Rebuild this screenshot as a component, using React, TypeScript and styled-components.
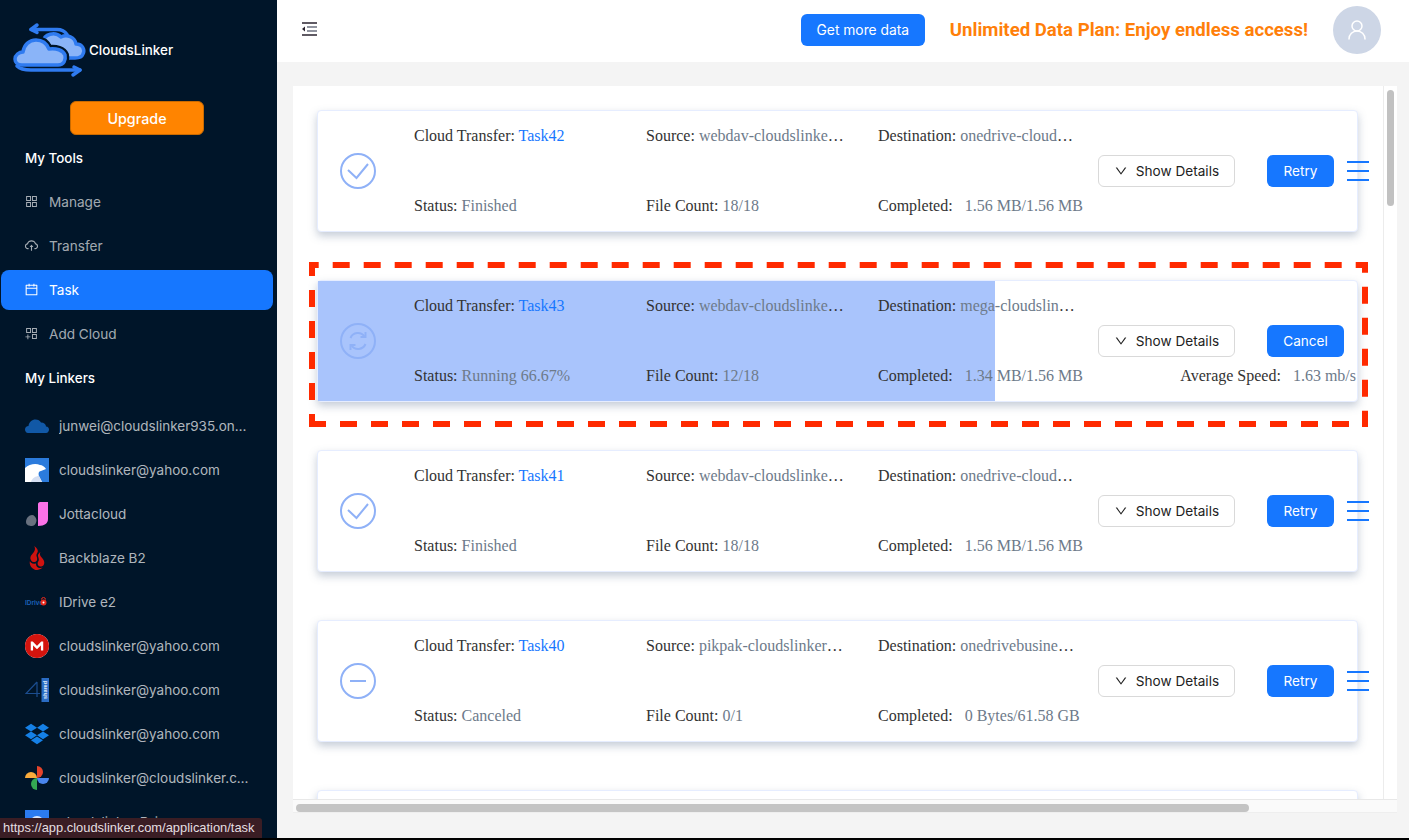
import React, {ReactNode} from 'react'
import styled, {createGlobalStyle} from 'styled-components'
import {
  AiOutlineAppstore,
  AiOutlineAppstoreAdd,
  AiOutlineCalendar,
  AiOutlineCloudUpload,
  AiOutlineDown
} from 'react-icons/ai'
import {FaDropbox} from 'react-icons/fa'
import {SiBackblaze, SiMega} from 'react-icons/si'
import {UserRound} from 'lucide-react'

type TaskStatus = 'finished' | 'running' | 'canceled'

interface Task {
  name: string
  status: TaskStatus
  statusText: string
  source: string
  destination: string
  files: string
  completed: string
  fill?: number
  speed?: string
}

const tasks: Task[] = [
  {
    name: 'Task42',
    status: 'finished',
    statusText: 'Finished',
    source: 'webdav-cloudslinker@yahoo.com',
    destination: 'onedrive-cloudslinker@yahoo.com',
    files: '18/18',
    completed: '1.56 MB/1.56 MB'
  },
  {
    name: 'Task43',
    status: 'running',
    statusText: 'Running 66.67%',
    source: 'webdav-cloudslinker@yahoo.com',
    destination: 'mega-cloudslinker@yahoo.com',
    files: '12/18',
    completed: '1.34 MB/1.56 MB',
    fill: 65.2,
    speed: '1.63 mb/s'
  },
  {
    name: 'Task41',
    status: 'finished',
    statusText: 'Finished',
    source: 'webdav-cloudslinker@yahoo.com',
    destination: 'onedrive-cloudslinker@yahoo.com',
    files: '18/18',
    completed: '1.56 MB/1.56 MB'
  },
  {
    name: 'Task40',
    status: 'canceled',
    statusText: 'Canceled',
    source: 'pikpak-cloudslinker@yahoo.com',
    destination: 'onedrivebusiness-cloudslinker@yahoo.com',
    files: '0/1',
    completed: '0 Bytes/61.58 GB'
  },
  {
    name: 'Task39',
    status: 'finished',
    statusText: 'Finished',
    source: 'webdav-cloudslinker@yahoo.com',
    destination: 'onedrive-cloudslinker@yahoo.com',
    files: '18/18',
    completed: '1.56 MB/1.56 MB'
  }
]

const tools = [
  {label: 'Manage', icon: <AiOutlineAppstore />},
  {label: 'Transfer', icon: <AiOutlineCloudUpload />},
  {label: 'Task', icon: <AiOutlineCalendar />, active: true},
  {label: 'Add Cloud', icon: <AiOutlineAppstoreAdd />}
]

const linkers: {label: string; logo: ReactNode}[] = [
  {label: 'junwei@cloudslinker935.onmicrosoft.com', logo: <OneDriveLogo />},
  {label: 'cloudslinker@yahoo.com', logo: <BearLogo />},
  {label: 'Jottacloud', logo: <JottaLogo />},
  {label: 'Backblaze B2', logo: <SiBackblaze size={24} color="#cf1310" />},
  {label: 'IDrive e2', logo: <IDriveLogo />},
  {label: 'cloudslinker@yahoo.com', logo: <MegaLogo />},
  {label: 'cloudslinker@yahoo.com', logo: <FourSharedLogo />},
  {label: 'cloudslinker@yahoo.com', logo: <FaDropbox size={24} color="#1580e6" />},
  {label: 'cloudslinker@cloudslinker.com', logo: <PhotosLogo />},
  {label: 'cloudslinker Drive', logo: <DriveLogo />}
]

// the red annotation: each side has its own dash phase
const markSides = [
  {d: 'M0 3H1059', offset: 7.3},
  {d: 'M0 162H1059', offset: 0},
  {d: 'M3 0V165', offset: 3},
  {d: 'M1056 0V165', offset: 6.3}
]

export default function App() {
  return (
    <Page>
      <GlobalStyle />
      <Body>
        <Sidebar>
          <Brand>
            <BrandLogo />
            <BrandName>CloudsLinker</BrandName>
          </Brand>
          <UpgradeButton>Upgrade</UpgradeButton>
          <SectionTitle>My Tools</SectionTitle>
          <Menu>
            {tools.map((tool) => (
              <MenuItem key={tool.label} $active={tool.active}>
                {tool.icon}
                {tool.label}
              </MenuItem>
            ))}
          </Menu>
          <SectionTitle>My Linkers</SectionTitle>
          <LinkerList>
            {linkers.map((linker, i) => (
              <LinkerItem key={i}>
                <LinkerLogo>{linker.logo}</LinkerLogo>
                <LinkerName>{linker.label}</LinkerName>
              </LinkerItem>
            ))}
          </LinkerList>
        </Sidebar>
        <Content>
          <Header>
            <ToggleButton>
              <OutdentIcon />
            </ToggleButton>
            <GetDataButton>Get more data</GetDataButton>
            <Promo>Unlimited Data Plan: Enjoy endless access!</Promo>
            <Avatar>
              <UserRound size={24} strokeWidth={1.5} color="#fff" />
            </Avatar>
          </Header>
          <Main>
            <Panel>
              <TaskList>
                {tasks.map((task) => (
                  <TaskCard key={task.name} task={task} />
                ))}
              </TaskList>
              <VerticalTrack>
                <VerticalThumb />
              </VerticalTrack>
              <HorizontalTrack>
                <HorizontalThumb />
              </HorizontalTrack>
            </Panel>
          </Main>
        </Content>
      </Body>
      <BottomEdge />
      <StatusLink>https://app.cloudslinker.com/application/task</StatusLink>
    </Page>
  )
}

function TaskCard({task}: {task: Task}) {
  const running = task.status === 'running'

  return (
    <Card>
      {task.fill !== undefined && <ProgressFill style={{width: `${task.fill}%`}} />}
      {running && <DashedMark />}
      <StatusIcon status={task.status} />
      <Cell>
        Cloud Transfer: <TaskLink>{task.name}</TaskLink>
      </Cell>
      <Cell>
        Source: <Value>{task.source}</Value>
      </Cell>
      <Cell>
        Destination: <Value>{task.destination}</Value>
      </Cell>
      <Actions>
        <DetailsButton>
          <AiOutlineDown size={14} />
          Show Details
        </DetailsButton>
        <PrimaryButton $wide={running}>{running ? 'Cancel' : 'Retry'}</PrimaryButton>
        {!running && <MoreIcon />}
      </Actions>
      <BottomCell>
        Status: <Value>{task.statusText}</Value>
      </BottomCell>
      <BottomCell>
        File Count: <Value>{task.files}</Value>
      </BottomCell>
      <BottomCell>
        Completed: <SpacedValue>{task.completed}</SpacedValue>
      </BottomCell>
      {task.speed && (
        <SpeedCell>
          Average Speed: <SpacedValue>{task.speed}</SpacedValue>
        </SpeedCell>
      )}
    </Card>
  )
}

function StatusIcon({status}: {status: TaskStatus}) {
  return (
    <IconSlot>
      <svg width="36" height="36" viewBox="0 0 36 36" fill="none" stroke="#8fb1f7" strokeWidth="2">
        <circle cx="18" cy="18" r="17" />
        {status === 'finished' && <path d="M8 17l8.500 8L28 11" />}
        {status === 'canceled' && <path d="M10 18h16" />}
        {status === 'running' && (
          <>
            <path d="M10.500 15A8 8 0 0 1 24.500 13.500" />
            <path d="M25.500 9v5h-5" />
            <path d="M25.500 21A8 8 0 0 1 11.500 22.500" />
            <path d="M10.500 27v-5h5" />
          </>
        )}
      </svg>
    </IconSlot>
  )
}

function MoreIcon() {
  return (
    <MoreSvg width="22" height="20" viewBox="0 0 22 20" stroke="#1677ff" strokeWidth="2">
      <path d="M0 1h22M0 10h22M0 19h22" />
    </MoreSvg>
  )
}

function OutdentIcon() {
  return (
    <svg width="16" height="14" viewBox="0 0 16 14">
      <path d="M1 1h15M1 13h15" stroke="#2b2530" strokeWidth="1.400" />
      <path d="M6 5h10M6 9h10" stroke="#6d7280" strokeWidth="1.400" />
      <path d="M1 7l3-2.500v5z" fill="#2b2530" />
    </svg>
  )
}

function DashedMark() {
  return (
    <MarkFrame width="1059" height="165" viewBox="0 0 1059 165">
      {markSides.map((side) => (
        <path
          key={side.d}
          d={side.d}
          fill="none"
          stroke="#ff2a00"
          strokeWidth="6"
          strokeDasharray="17 14"
          strokeDashoffset={side.offset}
        />
      ))}
    </MarkFrame>
  )
}

function BrandLogo() {
  return (
    <svg width="84" height="70" viewBox="0 0 84 70" fill="none" strokeLinecap="round" strokeLinejoin="round">
      <path d="M24 14.500h26c5 0 8 2 10 5" stroke="#2f7bf0" strokeWidth="3.500" />
      <path d="M30 10l-6 4.500 6 3" stroke="#2f7bf0" strokeWidth="3.500" />
      <path
        d="M36 27c1-8 12-11 18-5 6-3 14 0 15 7 7 0 9 6 7 10-1 3-4 4-8 4H56"
        fill="#8ab4f8"
        stroke="#2f7bf0"
        strokeWidth="3.500"
      />
      <path
        d="M15 50c-5 0-7-3-7-6 0-4 4-7 8-7 1-7 6-12 13-12 7 0 11 4 13 9 7-1 14 1 16 6 1 5-1 10-7 10z"
        fill="#8ab4f8"
        stroke="#001529"
        strokeWidth="8"
      />
      <path
        d="M15 50c-5 0-7-3-7-6 0-4 4-7 8-7 1-7 6-12 13-12 7 0 11 4 13 9 7-1 14 1 16 6 1 5-1 10-7 10z"
        fill="#8ab4f8"
        stroke="#2f7bf0"
        strokeWidth="3.500"
      />
      <path d="M10 51c3 3 8 4 14 4h49" stroke="#2f7bf0" strokeWidth="3.500" />
      <path d="M66 60l7-5-6-3" stroke="#2f7bf0" strokeWidth="3.500" />
    </svg>
  )
}

function OneDriveLogo() {
  return (
    <svg width="24" height="24" viewBox="0 0 24 24">
      <path
        d="M3 19c-2 0-3-2-3-3.500 0-2 1.500-3.500 3.500-3.500C4 8 7 5.500 10.500 5.500c2.500 0 4.500 1 5.500 3 3 0 5 2 5 4 2 0 3 1.500 3 3s-1 3.500-3 3.500z"
        fill="#1158a6"
      />
    </svg>
  )
}

function BearLogo() {
  return (
    <svg width="24" height="24" viewBox="0 0 24 24">
      <rect width="24" height="24" fill="#2b7bdc" />
      <path d="M0 10c4-4 11-5 15-3 2 0 5 2 6 4l-5 2c-3 0-3 4-1 7l2 4H0z" fill="#fff" />
      <path d="M6 24c1-4 5-6 8-6l3 6z" fill="#d5dff2" />
    </svg>
  )
}

function JottaLogo() {
  return (
    <svg width="24" height="24" viewBox="0 0 24 24">
      <path d="M15 0h8v17c0 4-3 7-10 7V2c0-1 1-2 2-2z" fill="#fb72e8" />
      <path d="M1 20c0-4 3-7 6-7 2 0 4 2 4.500 5 0 3-2 6-4.500 6-3 0-6-1-6-4z" fill="#68717f" />
    </svg>
  )
}

function IDriveLogo() {
  return (
    <svg width="24" height="24" viewBox="0 0 24 24">
      <text x="0" y="14.500" fontFamily="Liberation Sans, sans-serif" fontSize="6.500" fontWeight="700" fill="#1a5fb4">
        IDrive
      </text>
      <circle cx="18.500" cy="12.500" r="3" fill="#e8291c" />
      <circle cx="18.500" cy="12.500" r="1" fill="#fff" />
      <path d="M16.500 9.500a2 2 0 0 1 4 0" fill="none" stroke="#e8291c" />
    </svg>
  )
}

function MegaLogo() {
  return (
    <MegaDisc>
      <SiMega size={24} color="#d4140e" />
    </MegaDisc>
  )
}

function FourSharedLogo() {
  return (
    <svg width="24" height="24" viewBox="0 0 24 24">
      <path d="M12 4L1 15.500h14M12 4v15" fill="none" stroke="#1b4d8f" strokeWidth="1.200" />
      <rect x="16.500" y="0" width="7.500" height="24" fill="#2a6cc4" />
      <text
        x="0"
        y="0"
        transform="translate(22 21) rotate(-90)"
        fontFamily="Liberation Sans, sans-serif"
        fontSize="5.500"
        fontWeight="700"
        fill="#e6eefc"
      >
        shared
      </text>
    </svg>
  )
}

function PhotosLogo() {
  return (
    <svg width="24" height="24" viewBox="0 0 24 24">
      <path d="M12 12H0A6 6 0 0 1 12 12z" fill="#f9ab3c" />
      <path d="M12 12V0A6 6 0 0 1 12 12z" fill="#e5442b" />
      <path d="M12 12H24A6 6 0 0 1 12 12z" fill="#4a86ee" />
      <path d="M12 12V24A6 6 0 0 1 12 12z" fill="#34a853" />
    </svg>
  )
}

function DriveLogo() {
  return (
    <svg width="24" height="24" viewBox="0 0 24 24">
      <rect width="24" height="24" fill="#2b7bf0" />
      <circle cx="12" cy="13" r="7" fill="#dbe7fb" />
    </svg>
  )
}

const GlobalStyle = createGlobalStyle`
  html,
  body {
    margin: 0;
    padding: 0;
    height: 100%;
    overflow: hidden;
  }

  body {
    font-family: Inter, "Liberation Sans", sans-serif;
    font-size: 14px;
  }
`

const Page = styled.div`
  position: relative;
  display: flex;
  flex-direction: column;
  height: 840px;
`

const Body = styled.div`
  flex: 1;
  min-height: 0;
  display: flex;
`

const BottomEdge = styled.div`
  height: 2px;
  background: #000;
`

const Sidebar = styled.aside`
  width: 277px;
  flex: none;
  overflow: hidden;
  background: #001529;
  color: #fff;
  padding-top: 15px;
  box-sizing: border-box;
`

const Brand = styled.div`
  display: flex;
  align-items: center;
  padding-left: 7px;
  height: 70px;
`

const BrandName = styled.span`
  margin-left: -2px;
  padding-bottom: 1px;
  font-size: 13.4px;
  font-weight: 500;
`

const UpgradeButton = styled.button`
  display: block;
  width: 134px;
  height: 34px;
  margin: 16px 0 13px 70px;
  border: 1px solid #c96a00;
  border-radius: 6px;
  background: #ff8400;
  color: #fff;
  font: 500 14.3px Inter, sans-serif;
`

const SectionTitle = styled.div`
  height: 20px;
  line-height: 20px;
  padding-left: 25px;
  font-size: 13.4px;
  font-weight: 500;
`

const Menu = styled.nav`
  display: flex;
  flex-direction: column;
  gap: 4px;
  margin: 14px 0;
`

const MenuItem = styled.div<{$active?: boolean}>`
  display: flex;
  align-items: center;
  gap: 10px;
  box-sizing: border-box;
  height: 40px;
  margin: 0 4px 0 1px;
  padding: 0 0 1px 23px;
  border-radius: 8px;
  background: ${(p) => (p.$active ? '#1677ff' : 'transparent')};
  color: ${(p) => (p.$active ? '#fff' : 'rgba(255, 255, 255, 0.65)')};
  font-size: 13.6px;

  svg {
    font-size: 15px;
    flex: none;
  }
`

const LinkerList = styled.div`
  display: flex;
  flex-direction: column;
  gap: 4px;
  margin-top: 18px;
`

const LinkerItem = styled.div`
  display: flex;
  align-items: center;
  gap: 10px;
  height: 40px;
  padding-left: 25px;
  color: rgba(255, 255, 255, 0.7);
  font-size: 13.5px;
`

const LinkerLogo = styled.span`
  display: flex;
  width: 24px;
  height: 24px;
  flex: none;
`

const MegaDisc = styled.span`
  display: flex;
  border-radius: 50%;
  background: #fff;
`

const LinkerName = styled.span`
  max-width: 197px;
  padding-bottom: 1px;
  overflow: hidden;
  white-space: nowrap;
  text-overflow: ellipsis;
`

const Content = styled.div`
  flex: 1;
  min-width: 0;
  display: flex;
  flex-direction: column;
  background: #f4f4f4;
`

const Header = styled.header`
  height: 62px;
  flex: none;
  box-sizing: border-box;
  display: flex;
  align-items: center;
  padding: 0 28px 2px 24px;
  background: #fff;
`

const ToggleButton = styled.span`
  display: flex;
  margin-right: auto;
  padding-bottom: 2px;
`

const GetDataButton = styled.button`
  width: 124px;
  height: 32px;
  border: 0;
  border-radius: 6px;
  background: #1677ff;
  color: #fff;
  font: 13.8px Inter, sans-serif;
`

const Promo = styled.span`
  margin: 0 25px;
  color: #ff7f0a;
  font: 700 18.6px Roboto, sans-serif;
`

const Avatar = styled.span`
  display: flex;
  align-items: center;
  justify-content: center;
  width: 48px;
  height: 48px;
  border-radius: 50%;
  background: #cdd6e6;
`

const Main = styled.main`
  flex: 1;
  min-height: 0;
  padding: 24px 12px 25px 16px;
`

const Panel = styled.section`
  height: 100%;
  box-sizing: border-box;
  display: grid;
  grid-template-columns: minmax(0, 1fr) 14px;
  grid-template-rows: minmax(0, 1fr) 14px;
  background: #fff;
`

const TaskList = styled.div`
  display: flex;
  flex-direction: column;
  gap: 48px;
  overflow: hidden;
  padding: 24px 0 0 24px;
`

const VerticalTrack = styled.div`
  padding: 4px 3px;
  border-left: 1px solid #ececec;
  background: #fff;
`

const VerticalThumb = styled.div`
  height: 116px;
  border-radius: 4px;
  background: #c1c1c1;
`

const HorizontalTrack = styled.div`
  grid-column: 1 / 3;
  padding: 4px 3px;
  border-top: 1px solid #e8e8e8;
  border-bottom: 1px solid #eee;
  background: #fafafa;
  box-sizing: border-box;
`

const HorizontalThumb = styled.div`
  width: 953px;
  height: 8px;
  border-radius: 4px;
  background: #c4c4c4;
`

const Card = styled.article`
  position: relative;
  flex: none;
  display: grid;
  grid-template-columns: 96px 232px 232px 220px 260px;
  grid-template-rows: 20px 50px 20px;
  align-content: center;
  box-sizing: border-box;
  width: 1041px;
  height: 122px;
  border: 1px solid #e6edff;
  border-radius: 4px;
  background: #fff;
  box-shadow: 0 4px 8px rgba(90, 110, 140, 0.35);
  color: #333;
  font: 16px/20px "Liberation Serif", serif;
`

const ProgressFill = styled.div`
  position: absolute;
  top: 0;
  bottom: 0;
  left: 0;
  background: #a9c4fc;
`

const MarkFrame = styled.svg`
  position: absolute;
  top: -19px;
  left: -9px;
  z-index: 2;
  pointer-events: none;
`

const MoreSvg = styled.svg`
  flex: none;
`

const IconSlot = styled.div`
  position: relative;
  grid-row: 1 / 4;
  grid-column: 1;
  align-self: center;
  display: flex;
  padding-left: 22px;
`

const Cell = styled.div`
  position: relative;
  max-width: 200px;
  overflow: hidden;
  white-space: nowrap;
  text-overflow: ellipsis;
`

const BottomCell = styled(Cell)`
  grid-row: 3;
  max-width: none;
  overflow: visible;
`

const SpeedCell = styled.div`
  position: relative;
  grid-row: 3;
  grid-column: 5;
  justify-self: end;
  padding-right: 2px;
  white-space: nowrap;
`

const TaskLink = styled.span`
  color: #1677ff;
`

const Value = styled.span`
  color: #6d7a8a;
`

const SpacedValue = styled(Value)`
  margin-left: 8px;
`

const Actions = styled.div`
  position: relative;
  grid-column: 5;
  grid-row: 2;
  display: flex;
  align-items: center;
`

const DetailsButton = styled.button`
  display: flex;
  align-items: center;
  justify-content: center;
  gap: 8px;
  width: 137px;
  height: 32px;
  flex: none;
  margin-right: 32px;
  padding: 0;
  border: 1px solid #d9d9d9;
  border-radius: 6px;
  background: #fff;
  color: #222;
  font: 13.6px Inter, sans-serif;
`

const PrimaryButton = styled.button<{$wide?: boolean}>`
  width: ${(p) => (p.$wide ? '77px' : '67px')};
  height: 32px;
  flex: none;
  margin-right: 13px;
  padding: 0;
  border: 0;
  border-radius: 6px;
  background: #1677ff;
  color: #fff;
  font: 13.6px Inter, sans-serif;
`

const StatusLink = styled.div`
  position: absolute;
  left: 0;
  bottom: 2px;
  z-index: 3;
  width: 262px;
  height: 20px;
  box-sizing: border-box;
  padding-left: 3px;
  border-top-right-radius: 3px;
  background: #3a1d24;
  color: #e4dfe0;
  font: 12.9px/20px "Liberation Sans", sans-serif;
  white-space: nowrap;
`
